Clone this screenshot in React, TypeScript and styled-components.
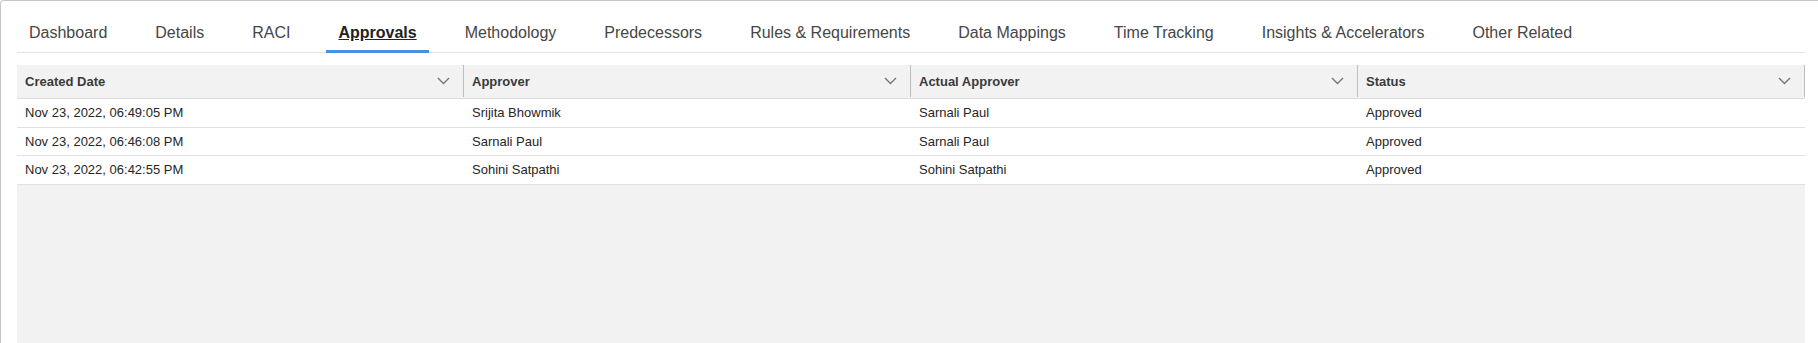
import React from "react";
import styled, { createGlobalStyle } from "styled-components";

const Global = createGlobalStyle`
  html, body { margin: 0; padding: 0; background: #ffffff; }
  body { font-family: "Liberation Sans", Arial, sans-serif; overflow: hidden; }
  * { box-sizing: border-box; }
`;

const Card = styled.div`
  width: 1818px;
  height: 343px;
  border-top: 1px solid #c6c6c6;
  border-left: 1px solid #c6c6c6;
  border-top-left-radius: 4px;
  padding: 0 13px 0 16px;
  display: flex;
  flex-direction: column;
  background: #ffffff;
`;

const TabList = styled.div`
  display: flex;
  gap: 24px;
  padding-top: 15px;
  border-bottom: 1px solid #e2e2e2;
`;

const Tab = styled.div<{ $active?: boolean }>`
  padding: 8px 12px;
  line-height: 18px;
  font-size: 16px;
  white-space: nowrap;
  color: ${(p) => (p.$active ? "#222222" : "#464646")};
  font-weight: ${(p) => (p.$active ? 700 : 400)};
  text-decoration: ${(p) => (p.$active ? "underline" : "none")};
  border-bottom: 3px solid ${(p) => (p.$active ? "#4a8fe6" : "transparent")};
  margin-bottom: -1px;
  cursor: pointer;
`;

const Table = styled.div`
  margin-top: 12px;
  flex: 1;
  display: flex;
  flex-direction: column;
  background: #f2f2f2;
`;

const HeaderRow = styled.div`
  display: grid;
  grid-template-columns: repeat(4, 1fr);
  height: 34px;
  border-bottom: 1px solid #dcdcdc;
  background: #f2f2f2;
`;

const HeaderCell = styled.div`
  height: 32px;
  display: flex;
  align-items: center;
  justify-content: space-between;
  padding: 0 13px 0 8px;
  border-right: 1px solid #bdbdbd;
  font-size: 13px;
  font-weight: 700;
  color: #3a3a3a;
`;

const Row = styled.div`
  display: grid;
  grid-template-columns: repeat(4, 1fr);
  height: 28.5px;
  flex-shrink: 0;
  border-bottom: 1px solid #e0e0e0;
  background: #ffffff;
`;

const Cell = styled.div`
  display: flex;
  align-items: center;
  padding: 0 8px;
  font-size: 13px;
  color: #262626;
  white-space: nowrap;
`;

const Chevron = () => (
  <svg width="13" height="8" viewBox="0 0 13 8" fill="none">
    <path d="M1 1 L6.5 6.5 L12 1" stroke="#767676" strokeWidth="1.4" />
  </svg>
);

const tabs = [
  "Dashboard",
  "Details",
  "RACI",
  "Approvals",
  "Methodology",
  "Predecessors",
  "Rules & Requirements",
  "Data Mappings",
  "Time Tracking",
  "Insights & Accelerators",
  "Other Related",
];

const columns = ["Created Date", "Approver", "Actual Approver", "Status"];

const rows = [
  ["Nov 23, 2022, 06:49:05 PM", "Srijita Bhowmik", "Sarnali Paul", "Approved"],
  ["Nov 23, 2022, 06:46:08 PM", "Sarnali Paul", "Sarnali Paul", "Approved"],
  ["Nov 23, 2022, 06:42:55 PM", "Sohini Satpathi", "Sohini Satpathi", "Approved"],
];

export default function App() {
  return (
    <>
      <Global />
      <Card>
        <TabList>
          {tabs.map((t) => (
            <Tab key={t} $active={t === "Approvals"}>
              {t}
            </Tab>
          ))}
        </TabList>
        <Table>
          <HeaderRow>
            {columns.map((c) => (
              <HeaderCell key={c}>
                <span>{c}</span>
                <Chevron />
              </HeaderCell>
            ))}
          </HeaderRow>
          {rows.map((r, i) => (
            <Row key={i}>
              {r.map((v, j) => (
                <Cell key={j}>{v}</Cell>
              ))}
            </Row>
          ))}
        </Table>
      </Card>
    </>
  );
}
